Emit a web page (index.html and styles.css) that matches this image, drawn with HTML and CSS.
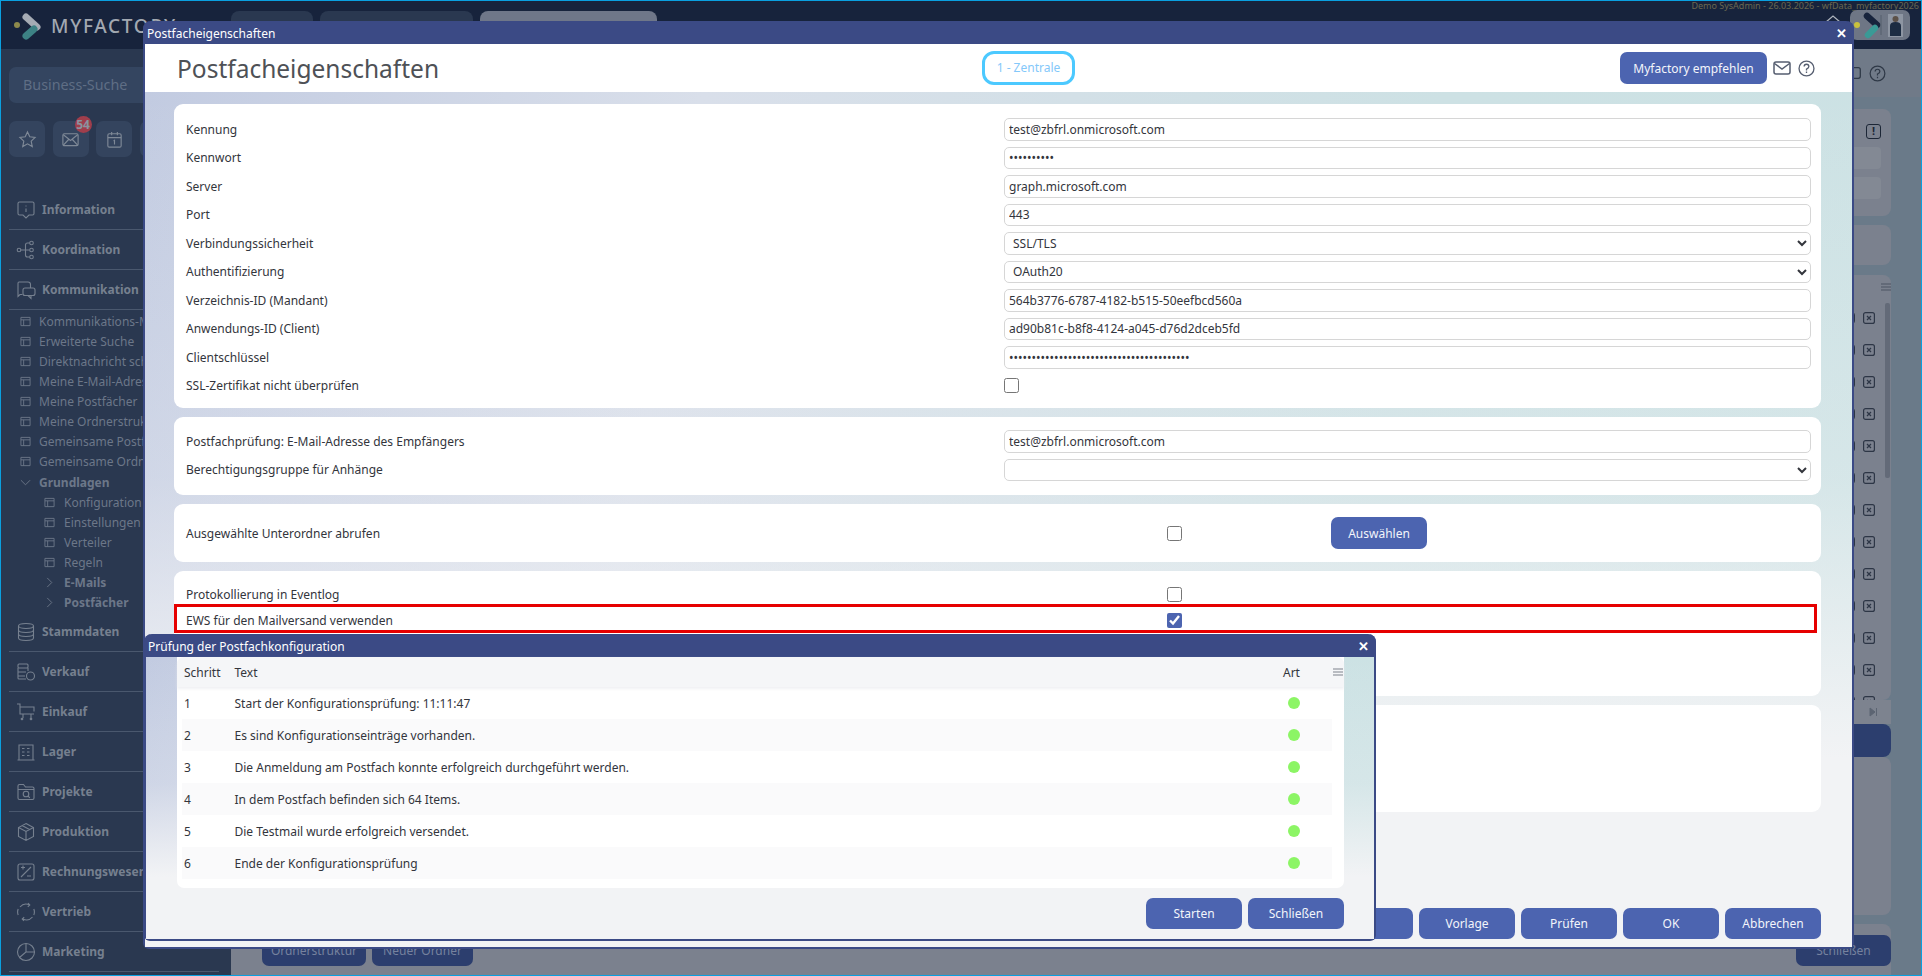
FILE: index.html
```html
<!DOCTYPE html>
<html lang="de">
<head>
<meta charset="utf-8">
<title>Postfacheigenschaften</title>
<link rel="stylesheet" href="styles.css">
</head>
<body>
<svg width="0" height="0" class="defs">
  <symbol id="i-tbl" viewBox="0 0 12 12"><path d="M1 1.500h10v9H1zM1 4.200h10M4 4.200v6.300" fill="none" stroke="currentColor"/></symbol>
  <symbol id="i-x" viewBox="0 0 12 12"><rect x=".6" y=".6" width="10.800" height="10.800" rx="2" fill="none" stroke="currentColor" stroke-width="1.200"/><path d="M4 4l4 4M8 4l-4 4" stroke="currentColor" stroke-width="1.200"/></symbol>
</svg>
<div class="app">
  <header class="topbar">
    <div class="brand">
      <svg class="brand-logo" viewBox="0 0 30 28"><circle cx="4" cy="13" r="3" fill="#8d8a4c"/><path d="M13 5l11 10" stroke="#a5abb4" stroke-width="7" stroke-linecap="round"/><path d="M21 17l-8 7" stroke="#3d8285" stroke-width="7" stroke-linecap="round"/></svg>
      <span class="brand-name">MYFACTORY</span>
    </div>
    <nav class="tabs">
      <span class="tab tab-a"></span>
      <span class="tab tab-b"></span>
      <span class="tab tab-c"></span>
    </nav>
    <div class="topright">
      <div class="demo">Demo SysAdmin - 26.03.2026 - wfData_myfactory2026</div>
      <div class="userbar">
        <svg class="roof" viewBox="0 0 16 8"><path d="M1 7l7-6 7 6" fill="none" stroke="#aeb4bd" stroke-width="1.200"/></svg>
        <div class="userbox">
          <svg viewBox="0 0 60 30" width="60" height="30"><circle cx="7" cy="15" r="3" fill="#c8c13c"/><path d="M17 6l10 9" stroke="#17233c" stroke-width="6.500" stroke-linecap="round"/><path d="M25 18l-7 7" stroke="#3a9a96" stroke-width="6.500" stroke-linecap="round"/><path d="M31 5v20" stroke="#555e6d"/><rect x="38" y="4" width="15" height="23" fill="#8d95a2"/><circle cx="45.500" cy="9" r="3" fill="#5c5148"/><path d="M40 26v-10q0-4 5.500-4t5.500 4v10z" fill="#1c2c42"/></svg>
        </div>
      </div>
    </div>
  </header>

  <aside class="sidebar">
    <div class="search">Business-Suche</div>
    <div class="quick">
      <span class="qbtn"><svg viewBox="0 0 20 20"><path d="M10 2l2.400 5.200 5.600.7-4.100 3.900 1.100 5.600-5-2.800-5 2.800 1.100-5.600L2 7.900l5.600-.7z"/></svg></span>
      <span class="qbtn"><svg viewBox="0 0 20 20"><rect x="2" y="4" width="16" height="12.500" rx="1.500"/><path d="M2.500 5l7.500 6 7.500-6M2.500 16l5.500-6M17.500 16l-5.500-6"/></svg><b class="badge">54</b></span>
      <span class="qbtn"><svg viewBox="0 0 20 20"><rect x="3" y="4" width="14" height="14" rx="1.500"/><path d="M3 8h14M7 2v3.500M13 2v3.500M9 11.500l1-.7v4.500"/></svg></span>
      <span class="qbtn"></span>
    </div>
    <ul class="nav">
      <li class="nav-main"><svg viewBox="0 0 20 20"><path d="M3.500 2h13a1.500 1.500 0 0 1 1.500 1.500v10a1.500 1.500 0 0 1-1.500 1.500H13l-3 3-3-3H3.500A1.500 1.500 0 0 1 2 13.500v-10A1.500 1.500 0 0 1 3.500 2zM10 5.500v1M10 8.500v3.500"/></svg>Information</li>
      <li class="nav-main"><svg viewBox="0 0 20 20"><circle cx="3" cy="10" r="1.800"/><circle cx="15.500" cy="3" r="1.800"/><circle cx="15.500" cy="10" r="1.800"/><circle cx="15.500" cy="17" r="1.800"/><path d="M5 10h8.500M13.700 3H11.500q-2 0-2 2v10q0 2 2 2h2.200"/></svg>Koordination</li>
      <li class="nav-main nav-open"><svg viewBox="0 0 20 20"><path d="M3 2h9q2.500 0 2.500 2.500V8M6.500 14.500H4L2 16.500V3.500Q2 2 3 2"/><rect x="7" y="8" width="12" height="7.500" rx="2"/><path d="M15 15.500v3l-3-3"/></svg>Kommunikation</li>
      <li class="nav-sub"><svg><use href="#i-tbl"/></svg>Kommunikations-Monitor</li>
      <li class="nav-sub"><svg><use href="#i-tbl"/></svg>Erweiterte Suche</li>
      <li class="nav-sub"><svg><use href="#i-tbl"/></svg>Direktnachricht schreiben</li>
      <li class="nav-sub"><svg><use href="#i-tbl"/></svg>Meine E-Mail-Adressen</li>
      <li class="nav-sub"><svg><use href="#i-tbl"/></svg>Meine Postfächer</li>
      <li class="nav-sub"><svg><use href="#i-tbl"/></svg>Meine Ordnerstruktur</li>
      <li class="nav-sub"><svg><use href="#i-tbl"/></svg>Gemeinsame Postfächer</li>
      <li class="nav-sub"><svg><use href="#i-tbl"/></svg>Gemeinsame Ordner</li>
      <li class="nav-sub nav-group nav-top"><svg viewBox="0 0 12 12"><path d="M1 3.500l5 5 5-5" fill="none" stroke="currentColor"/></svg>Grundlagen</li>
      <li class="nav-sub nav-deep"><svg><use href="#i-tbl"/></svg>Konfiguration</li>
      <li class="nav-sub nav-deep"><svg><use href="#i-tbl"/></svg>Einstellungen</li>
      <li class="nav-sub nav-deep"><svg><use href="#i-tbl"/></svg>Verteiler</li>
      <li class="nav-sub nav-deep"><svg><use href="#i-tbl"/></svg>Regeln</li>
      <li class="nav-sub nav-deep nav-group"><svg viewBox="0 0 12 12"><path d="M3.500 1l5 5-5 5" fill="none" stroke="currentColor"/></svg>E-Mails</li>
      <li class="nav-sub nav-deep nav-group"><svg viewBox="0 0 12 12"><path d="M3.500 1l5 5-5 5" fill="none" stroke="currentColor"/></svg>Postfächer</li>
      <li class="nav-main"><svg viewBox="0 0 20 20"><ellipse cx="10" cy="4" rx="7.500" ry="2.500"/><path d="M2.500 4v12c0 1.400 3.400 2.500 7.500 2.500s7.500-1.100 7.500-2.500V4M2.500 8c0 1.400 3.400 2.500 7.500 2.500s7.500-1.100 7.500-2.500M2.500 12c0 1.400 3.400 2.500 7.500 2.500s7.500-1.100 7.500-2.500"/></svg>Stammdaten</li>
      <li class="nav-main"><svg viewBox="0 0 20 20"><rect x="2" y="2" width="10" height="4" rx="1"/><path d="M2 6v10q0 1 1 1h7M12 6v3M2 10h8M2 14h7"/><circle cx="14.500" cy="14" r="4"/></svg>Verkauf</li>
      <li class="nav-main"><svg viewBox="0 0 20 20"><path d="M1 2h3v10h14M4 5h14v4.500M7 12v4M15 12v4"/><circle cx="6" cy="17" r=".8"/><circle cx="15" cy="17" r=".8"/></svg>Einkauf</li>
      <li class="nav-main"><svg viewBox="0 0 20 20"><path d="M3 18V3h14v15M1.500 18h17M6 6.500h2.500M11 6.500h2.500M6 10h2.500M11 10h2.500M6 13.500h2.500M11 13.500h2.500"/></svg>Lager</li>
      <li class="nav-main"><svg viewBox="0 0 20 20"><path d="M2 16V4q0-1.500 1.500-1.500h4l2 2.500h7Q18 5 18 6.500V16q0 1.500-1.500 1.500h-13Q2 17.500 2 16zM2 7.500h16"/><circle cx="10" cy="12" r="2.800"/><path d="M12 14l1.800 1.800"/></svg>Projekte</li>
      <li class="nav-main"><svg viewBox="0 0 20 20"><path d="M10 1.500l7.500 4v9l-7.500 4-7.500-4v-9zM2.500 5.500l7.500 4 7.500-4M10 9.500v9M6 3.500l7.500 4"/></svg>Produktion</li>
      <li class="nav-main"><svg viewBox="0 0 20 20"><rect x="2" y="2" width="16" height="16" rx="2"/><path d="M5 5.500h4M7 3.500v4M5 15l10-10M11 14h4"/></svg>Rechnungswesen</li>
      <li class="nav-main"><svg viewBox="0 0 20 20"><path d="M4 5a8 8 0 0 1 9.500-2M16.500 15a8 8 0 0 1-9.500 2M2.200 13a8 8 0 0 1 0-6M17.800 7a8 8 0 0 1 0 6M12 1l1.800 2-2 1.800M8 19l-1.800-2 2-1.800"/></svg>Vertrieb</li>
      <li class="nav-main"><svg viewBox="0 0 20 20"><circle cx="10" cy="10" r="8.500"/><path d="M10 1.500V10l-6.500 5.500M10 10l8.500 0"/></svg>Marketing</li>
    </ul>
  </aside>

  <main class="main">
    <div class="strip">
      <svg class="strip-mail" viewBox="0 0 16 12"><rect x=".7" y=".7" width="14.600" height="10.600" rx="2" fill="none" stroke="currentColor" stroke-width="1.300"/></svg>
      <svg class="strip-help" viewBox="0 0 18 18"><circle cx="9" cy="9" r="7.800" fill="none" stroke="currentColor" stroke-width="1.300"/><path d="M6.500 7q0-2.500 2.500-2.500T11.500 7q0 1.500-2.500 2.500V11M9 12.500v1.500" fill="none" stroke="currentColor" stroke-width="1.300"/></svg>
    </div>
    <div class="panes">
      <section class="pane pane-a">
        <div class="warn-row"><span class="warn">!</span></div>
        <div class="ghost"></div>
        <div class="ghost"></div>
      </section>
      <section class="pane pane-b"></section>
      <section class="pane pane-list">
        <div class="list-head"><span class="burger dim"></span></div>
        <div class="list-row"><span class="pill-i"></span><svg class="x-i"><use href="#i-x"/></svg></div>
        <div class="list-row"><span class="pill-i"></span><svg class="x-i"><use href="#i-x"/></svg></div>
        <div class="list-row"><span class="pill-i"></span><svg class="x-i"><use href="#i-x"/></svg></div>
        <div class="list-row"><span class="pill-i"></span><svg class="x-i"><use href="#i-x"/></svg></div>
        <div class="list-row"><span class="pill-i"></span><svg class="x-i"><use href="#i-x"/></svg></div>
        <div class="list-row"><span class="pill-i"></span><svg class="x-i"><use href="#i-x"/></svg></div>
        <div class="list-row"><span class="pill-i"></span><svg class="x-i"><use href="#i-x"/></svg></div>
        <div class="list-row"><span class="pill-i"></span><svg class="x-i"><use href="#i-x"/></svg></div>
        <div class="list-row"><span class="pill-i"></span><svg class="x-i"><use href="#i-x"/></svg></div>
        <div class="list-row"><span class="pill-i"></span><svg class="x-i"><use href="#i-x"/></svg></div>
        <div class="list-row"><span class="pill-i"></span><svg class="x-i"><use href="#i-x"/></svg></div>
        <div class="list-row"><span class="pill-i"></span><svg class="x-i"><use href="#i-x"/></svg></div>
        <div class="list-row"><span class="pill-i"></span><svg class="x-i"><use href="#i-x"/></svg></div>
        <span class="list-scroll"></span>
      </section>
      <div class="pager"><svg viewBox="0 0 10 10" width="10" height="10"><path d="M1 1l5 4-5 4zM7.500 1v8" fill="#5c6472" stroke="#5c6472"/></svg></div>
      <div class="dark-btn"></div>
      <section class="pane pane-c"></section>
      <footer class="pane-foot">
        <button class="dim-btn dim-btn-a">Ordnerstruktur</button>
        <button class="dim-btn dim-btn-b">Neuer Ordner</button>
        <button class="dim-btn dim-btn-c">Schließen</button>
      </footer>
    </div>
  </main>

  <!-- Dialog 1 -->
  <section class="dialog dialog-main">
    <div class="dlg-title"><span>Postfacheigenschaften</span><span class="dlg-x">✕</span></div>
    <div class="dlg-head">
      <h1 class="dlg-h1">Postfacheigenschaften</h1>
      <span class="site-pill">1 - Zentrale</span>
      <div class="head-right">
        <button class="btn btn-rec">Myfactory empfehlen</button>
        <svg class="head-mail" viewBox="0 0 18 14"><rect x="1" y="1" width="16" height="12" rx="2" fill="none" stroke="#565e70" stroke-width="1.500"/><path d="M1.500 2.500L9 8l7.500-5.500" fill="none" stroke="#565e70" stroke-width="1.500"/></svg>
        <svg class="head-help" viewBox="0 0 18 18"><circle cx="9" cy="9" r="7.900" fill="none" stroke="#565e70" stroke-width="1.400"/><path d="M6.500 7q0-2.500 2.500-2.500T11.500 7q0 1.500-2.500 2.700V11M9 12.200v1.500" fill="none" stroke="#565e70" stroke-width="1.400"/></svg>
      </div>
    </div>
    <div class="dlg-body">
      <div class="card card-1">
        <div class="frow"><label>Kennung</label><input class="fld" value="test@zbfrl.onmicrosoft.com"></div>
        <div class="frow"><label>Kennwort</label><input class="fld" type="password" value="0123456789"></div>
        <div class="frow"><label>Server</label><input class="fld" value="graph.microsoft.com"></div>
        <div class="frow"><label>Port</label><input class="fld" value="443"></div>
        <div class="frow"><label>Verbindungssicherheit</label><select class="fld"><option>SSL/TLS</option></select></div>
        <div class="frow"><label>Authentifizierung</label><select class="fld"><option>OAuth20</option></select></div>
        <div class="frow"><label>Verzeichnis-ID (Mandant)</label><input class="fld" value="564b3776-6787-4182-b515-50eefbcd560a"></div>
        <div class="frow"><label>Anwendungs-ID (Client)</label><input class="fld" value="ad90b81c-b8f8-4124-a045-d76d2dceb5fd"></div>
        <div class="frow"><label>Clientschlüssel</label><input class="fld" type="password" value="0123456789012345678901234567890123456789"></div>
        <div class="frow"><label>SSL-Zertifikat nicht überprüfen</label><span><input class="chk" type="checkbox"></span></div>
      </div>
      <div class="card card-2">
        <div class="frow"><label>Postfachprüfung: E-Mail-Adresse des Empfängers</label><input class="fld" value="test@zbfrl.onmicrosoft.com"></div>
        <div class="frow"><label>Berechtigungsgruppe für Anhänge</label><select class="fld"><option></option></select></div>
      </div>
      <div class="card card-3">
        <div class="crow crow-btn"><label>Ausgewählte Unterordner abrufen</label><span class="cbox"><input class="chk" type="checkbox"></span><button class="btn btn-pick">Auswählen</button></div>
      </div>
      <div class="card card-4">
        <div class="crow"><label>Protokollierung in Eventlog</label><span class="cbox"><input class="chk" type="checkbox"></span></div>
        <div class="crow crow-mark"><label>EWS für den Mailversand verwenden</label><span class="cbox"><input class="chk" type="checkbox" checked></span><span class="mark"></span></div>
      </div>
      <div class="card card-5"></div>
      <div class="dlg-foot">
        <button class="btn btn-foot">&nbsp;</button>
        <button class="btn btn-foot">Vorlage</button>
        <button class="btn btn-foot">Prüfen</button>
        <button class="btn btn-foot">OK</button>
        <button class="btn btn-foot">Abbrechen</button>
      </div>
    </div>
  </section>

  <!-- Dialog 2 -->
  <section class="dialog dialog-check">
    <div class="dlg-title"><span>Prüfung der Postfachkonfiguration</span><span class="dlg-x">✕</span></div>
    <div class="dlg-body check-body">
      <div class="check-card">
        <div class="check-head"><span>Schritt</span><span>Text</span><span>Art</span><span class="burger"></span></div>
        <div class="check-row"><span>1</span><span>Start der Konfigurationsprüfung: 11:11:47</span><i class="dot"></i></div>
        <div class="check-row"><span>2</span><span>Es sind Konfigurationseinträge vorhanden.</span><i class="dot"></i></div>
        <div class="check-row"><span>3</span><span>Die Anmeldung am Postfach konnte erfolgreich durchgeführt werden.</span><i class="dot"></i></div>
        <div class="check-row"><span>4</span><span>In dem Postfach befinden sich 64 Items.</span><i class="dot"></i></div>
        <div class="check-row"><span>5</span><span>Die Testmail wurde erfolgreich versendet.</span><i class="dot"></i></div>
        <div class="check-row"><span>6</span><span>Ende der Konfigurationsprüfung</span><i class="dot"></i></div>
      </div>
      <div class="check-foot">
        <button class="btn btn-foot">Starten</button>
        <button class="btn btn-foot">Schließen</button>
      </div>
    </div>
  </section>
</div>
</body>
</html>
```

FILE: styles.css
```css
* { box-sizing: border-box; }
html, body { margin: 0; padding: 0; }
body { width: 1922px; height: 976px; overflow: hidden; font-family: "Noto Sans", "Open Sans", sans-serif; font-size: 12px; }
.defs { position: absolute; }
ul { list-style: none; margin: 0; padding: 0; }
button { font-family: inherit; }

.app { position: relative; width: 1922px; height: 976px; border: 1px solid #0aa0e0; display: grid; grid-template-columns: 230px 1fr; grid-template-rows: 48px 1fr; overflow: hidden; background: #6a7a89; }

/* top bar */
.topbar { grid-column: 1 / 3; background: #17233c; display: flex; }
.brand { width: 230px; display: flex; align-items: flex-start; padding: 11px 0 0 12px; gap: 8px; }
.brand-logo { width: 30px; height: 28px; flex: none; }
.brand-name { font-size: 19px; font-weight: 500; letter-spacing: 1.700px; color: #a2a8b1; line-height: 26px; margin-top: 1px; }
.tabs { display: flex; gap: 7px; padding-top: 10px; }
.tab { display: block; height: 38px; border-radius: 8px 8px 0 0; background: #2a3850; }
.tab-a { width: 82px; }
.tab-b { width: 153px; }
.tab-c { width: 177px; background: #6f7789; }
.topright { margin-left: auto; display: flex; flex-direction: column; align-items: flex-end; padding-right: 2px; }
.demo { font-size: 9px; line-height: 10px; color: #6a6850; }
.userbar { display: flex; align-items: flex-start; margin-top: -1px; padding-right: 9px; }
.roof { width: 16px; height: 8px; margin: 5px 9px 0 0; }
.userbox { width: 60px; height: 30px; border-radius: 7px; background: #6e7685; }

/* sidebar */
.sidebar { background: #2a3850; padding: 18px 0 0 8px; overflow: hidden; color: #76808f; }
.search { width: 214px; height: 36px; border-radius: 7px; background: #344560; color: #5f6e85; font-size: 14.300px; line-height: 36px; padding-left: 14px; }
.quick { display: flex; gap: 7.500px; margin-top: 18px; }
.qbtn { position: relative; display: flex; align-items: center; justify-content: center; width: 36px; height: 36px; border-radius: 7px; background: #34445e; }
.qbtn svg { width: 19px; height: 19px; fill: none; stroke: #7f8997; stroke-width: 1.200; }
.badge { position: absolute; right: -3px; top: -5px; width: 17px; height: 17px; border-radius: 50%; background: #a03e4c; color: #8a93a0; font-size: 12px; line-height: 17px; text-align: center; }
.nav { margin-top: 33px; width: 210px; }
.nav-main { height: 40px; border-bottom: 1px solid #4a586e; display: flex; align-items: center; font-size: 12px; font-weight: 700; white-space: nowrap; gap: 6px; padding-left: 7px; color: #76808f; }
.nav-main svg { width: 20px; height: 20px; flex: none; fill: none; stroke: #76808f; stroke-width: 1.100; }
.nav-open { margin-bottom: 1px; }
.nav-sub { height: 20px; display: flex; align-items: center; font-size: 12px; white-space: nowrap; padding-left: 11px; gap: 8px; color: #6c7789; }
.nav-sub svg { width: 11px; height: 11px; flex: none; }
.nav-group { font-weight: 700; }
.nav-top { margin-top: 1px; }
.nav-deep { padding-left: 35px; gap: 9px; }

/* main, dimmed behind the dialog */
.main { display: flex; flex-direction: column; min-width: 0; color: #27303f; }
.strip { height: 48px; background: #707a88; display: flex; justify-content: flex-end; align-items: center; padding: 0 35px 0 0; gap: 8px; color: #2f3947; }
.strip-mail { width: 16px; height: 12px; }
.strip-help { width: 17px; height: 17px; }
.panes { margin: 12px 30px 0 0; flex: 1; display: flex; flex-direction: column; }
.pane { background: #7b818e; border-radius: 8px; }
.pane-a { height: 107px; padding: 15px 10px 0 0; }
.warn-row { display: flex; justify-content: flex-end; }
.warn { width: 15px; height: 15px; border: 1.500px solid #1c2636; border-radius: 3px; font-size: 11px; font-weight: 700; line-height: 12px; text-align: center; color: #1c2636; }
.ghost { height: 22px; margin-top: 8px; background: #838994; border-radius: 4px; }
.pane-b { height: 40px; margin-top: 9px; }
.pane-list { position: relative; height: 425px; margin-top: 10px; overflow: hidden; padding-top: 27px; }
.list-head { position: absolute; top: 8px; right: 0; }
.burger { display: block; width: 10px; height: 9px; background: repeating-linear-gradient(#b9bcc2 0 2px, transparent 2px 3px); }
.burger.dim { background: repeating-linear-gradient(#636a78 0 2px, transparent 2px 3px); }
.list-row { height: 32px; display: flex; justify-content: flex-end; align-items: center; padding-right: 16px; gap: 8px; color: #2d3646; }
.pill-i { width: 12px; height: 12px; border: 1.200px solid #2d3646; border-radius: 3px; }
.x-i { width: 12px; height: 12px; }
.list-scroll { position: absolute; right: 1px; top: 28px; width: 5px; height: 175px; background: #636a78; border-radius: 2px; }
.pager { height: 24px; background: #7d838f; display: flex; justify-content: flex-end; align-items: center; padding-right: 12px; }
.dark-btn { height: 33px; background: #2c3e6e; border-radius: 8px; }
.pane-c { height: 158px; }
.pane-foot { flex: 1; margin-top: 9px; background: #7b818e; border-radius: 8px 8px 0 0; display: flex; padding: 11px 0 0 31px; gap: 6px; align-items: flex-start; }
.dim-btn { height: 31px; border: 0; border-radius: 7px; background: #2c3e6e; color: #76829e; font-size: 12px; padding: 0; }
.dim-btn-a { width: 104px; }
.dim-btn-b { width: 101px; }
.dim-btn-c { width: 95px; margin-left: auto; }

/* dialogs */
.dialog { position: absolute; display: flex; flex-direction: column; border: 2px solid #3b4a85; border-top: 0; border-radius: 8px 8px 6px 6px; }
.dialog-main { left: 142px; top: 20px; width: 1711px; height: 928px; }
.dialog-check { left: 143px; top: 633px; width: 1232px; height: 307px; }
.dlg-title { flex: none; margin: 0 -2px; height: 23px; background: #3b4a85; border-radius: 8px 8px 0 0; color: #fff; font-size: 12px; line-height: 25px; padding: 0 6px 0 4px; display: flex; justify-content: space-between; }
.dlg-x { font-size: 13px; font-weight: 700; margin-right: 1px; }
.dlg-head { flex: none; height: 48px; background: #fff; display: flex; align-items: center; padding-left: 32px; }
.dlg-h1 { flex: 0 0 805px; margin: 0; font-size: 24.500px; font-weight: 400; color: #4e5156; }
.site-pill { width: 93px; height: 34px; border: 3px solid #4cc9ff; border-radius: 12px; color: #84c8fa; font-size: 12px; line-height: 28px; text-align: center; }
.head-right { margin-left: auto; display: flex; align-items: center; padding-right: 37px; }
.btn { border: 0; border-radius: 7px; background: #4c64b0; color: #f3f5fb; font-size: 12px; padding: 0; }
.btn-rec { width: 147px; height: 32px; margin-right: 6px; }
.head-mail { width: 18px; height: 14px; margin-right: 7px; }
.head-help { width: 17px; height: 17px; }
.dlg-body { flex: 1; min-height: 0; display: flex; flex-direction: column; padding: 12px 31px 8px 29px; gap: 9px;
  background: linear-gradient(180deg, rgba(242,243,245,0) 0%, rgba(242,243,245,.25) 45%, #f2f3f5 78%), linear-gradient(100deg, #c2cbe1 0%, #d9dfea 30%, #cde1e4 70%, #cce2e4 100%); }
.card { background: #fff; border-radius: 9px; color: #33353c; font-size: 12px; }
.card-1 { height: 304px; padding: 11px 10px 0 12px; }
.card-2 { height: 78px; padding: 10px 10px 0 12px; }
.card-3 { height: 58px; padding: 13px 10px 0 12px; }
.card-4 { height: 125px; padding: 10px 10px 0 12px; }
.card-5 { height: 107px; }
.frow { display: grid; grid-template-columns: 818px 1fr; align-items: center; height: 28.500px; }
.fld { display: block; width: 100%; height: 22.500px; border: 1px solid #d6d6d6; border-radius: 5px; background: #fff; color: #33353c; font: inherit; padding: 0 4px; outline: 0; }
.frow span { display: flex; }
.chk { width: 15px; height: 15px; margin: 0; accent-color: #4c64b0; display: block; }
.crow { position: relative; display: grid; grid-template-columns: 981px 164px auto; align-items: center; height: 26px; }
.crow-btn { height: 32px; }
.btn-pick { width: 96px; height: 32px; }
.mark { position: absolute; left: -12px; right: -6px; top: -3px; bottom: 0; border: 3px solid #e60000; }
.dlg-foot { margin-top: auto; display: flex; justify-content: flex-end; gap: 6px; }
.btn-foot { width: 96px; height: 31px; }

.check-body { padding: 0 30px 10px 31px; gap: 0; }
.check-card { height: 231px; background: #fff; border-radius: 0 0 7px 7px; font-size: 12px; color: #33353c; }
.check-head, .check-row { display: grid; grid-template-columns: 50.500px 1048.500px 1fr; align-items: center; }
.check-head { position: relative; height: 30px; padding-left: 7px; background: #f5f6f8; box-shadow: 0 2px 3px rgba(230,232,236,.6); border-radius: 7px 7px 0 0; }
.check-head .burger { position: absolute; right: 1px; top: 11px; }
.check-row { height: 32px; margin: 0 12px 0 5px; padding-left: 2px; }
.check-row:nth-of-type(odd) { background: #fafafb; }
.dot { width: 12px; height: 12px; margin-left: 4.500px; border-radius: 50%; background: #8cf565; }
.check-foot { margin-top: auto; display: flex; justify-content: flex-end; gap: 6px; }
```
